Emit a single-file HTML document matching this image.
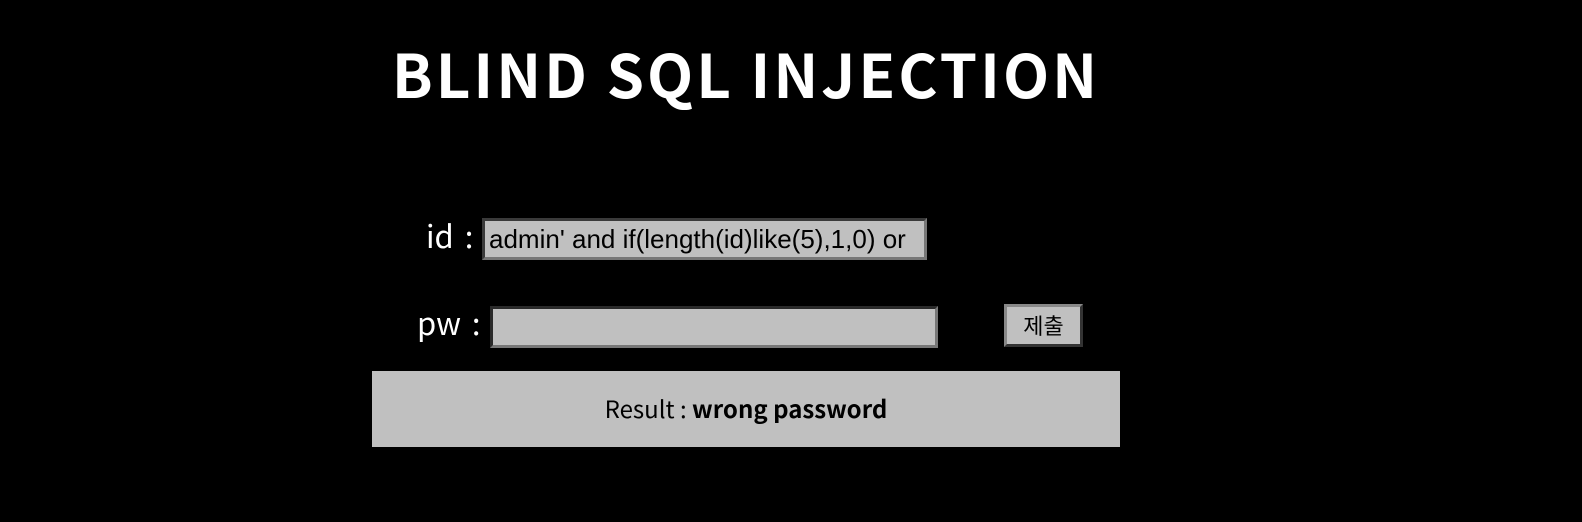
<!DOCTYPE html>
<html><head><meta charset="utf-8"><style>
body{margin:0;background:#000;width:1582px;height:522px;position:relative;overflow:hidden;font-family:"Liberation Sans","Noto Sans CJK KR",sans-serif}
.a{position:absolute}
h1{position:absolute;left:0;width:1492px;top:23px;margin:0;text-align:center;color:#fff;font:bold 60px/100px "Noto Sans CJK KR",sans-serif;letter-spacing:3px}
.lbl{color:#fff;font:31px/1 "Noto Sans CJK KR",sans-serif;word-spacing:4px}
.inp{background:#c0c0c0;box-sizing:border-box;border:3px solid;border-color:#3a3a3a #777 #777 #3a3a3a;color:#000;font-size:26px;line-height:36px;padding-left:4px;white-space:nowrap;overflow:hidden}
</style></head><body>
<h1>BLIND SQL INJECTION</h1>
<div class="a lbl" style="left:426px;top:219px">id :</div>
<div class="a inp" style="left:482px;top:218px;width:445px;height:42px">admin' and if(length(id)like(5),1,0) or</div>
<div class="a lbl" style="left:417px;top:306px">pw :</div>
<div class="a inp" style="left:490px;top:306px;width:448px;height:42px;border-color:#2a2a2a #777 #777 #2a2a2a"></div>
<div class="a inp" style="left:1004px;top:304px;width:79px;height:43px;padding:0;text-align:center;font:22px/36px 'Noto Sans CJK KR',sans-serif;border-color:#888 #333 #333 #888">제출</div>
<div class="a" style="left:372px;top:371px;width:748px;height:76px;background:#c0c0c0;text-align:center;font:24px/74px 'Noto Sans CJK KR',sans-serif;color:#000">Result : <b>wrong password</b></div>
</body></html>
